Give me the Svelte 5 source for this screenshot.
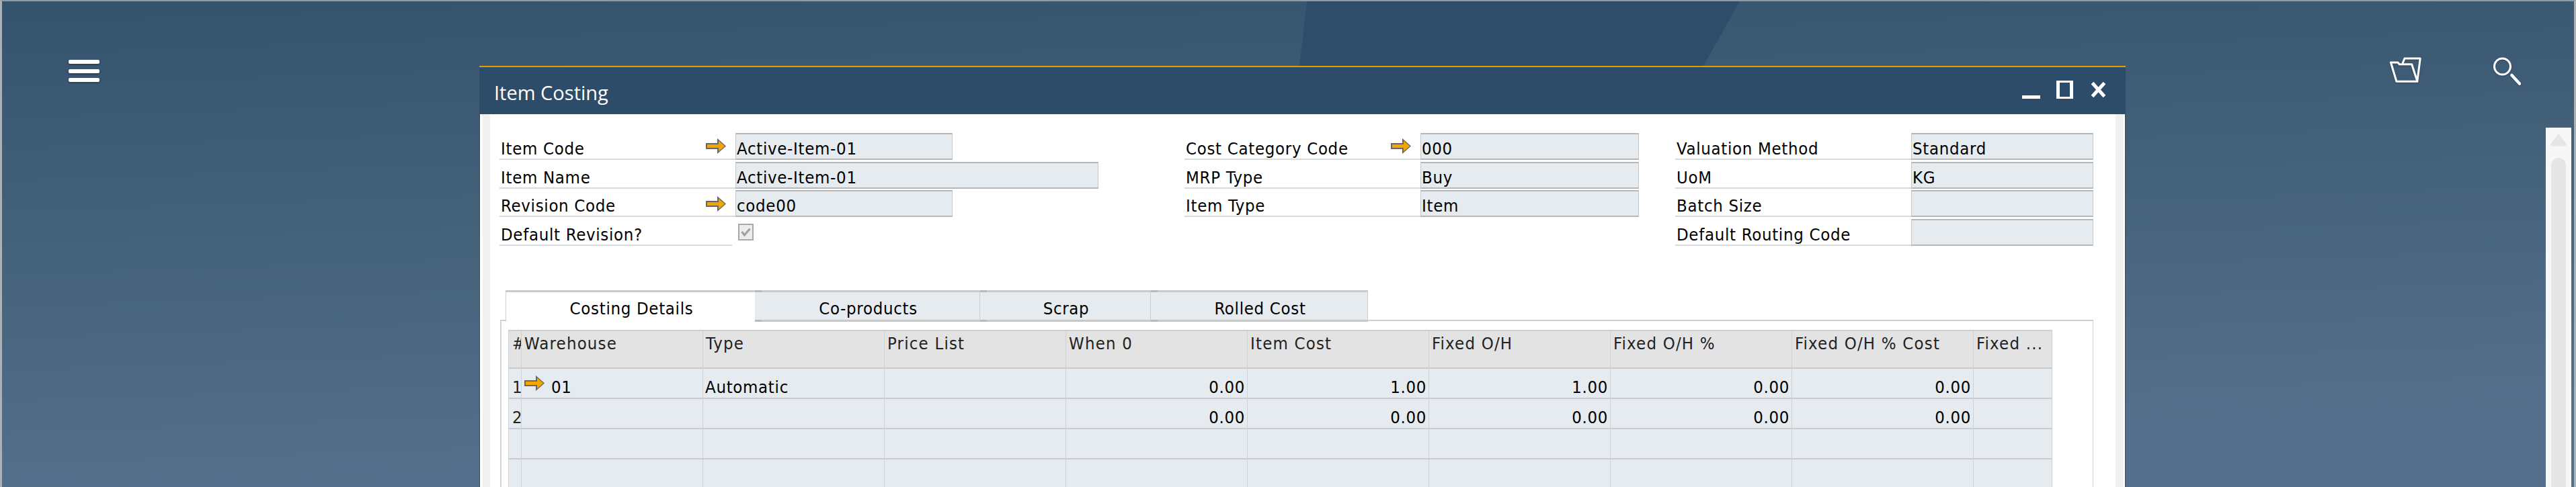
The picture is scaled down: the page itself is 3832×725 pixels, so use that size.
<script>
  const columns = [
    [
      { label: "Item Code", value: "Active-Item-01", link: true, width: 323 },
      { label: "Item Name", value: "Active-Item-01", width: 540 },
      { label: "Revision Code", value: "code00", link: true, width: 323 },
      { label: "Default Revision?", check: true },
    ],
    [
      { label: "Cost Category Code", value: "000", link: true, width: 325 },
      { label: "MRP Type", value: "Buy", width: 325 },
      { label: "Item Type", value: "Item", width: 325 },
    ],
    [
      { label: "Valuation Method", value: "Standard", width: 271 },
      { label: "UoM", value: "KG", width: 271 },
      { label: "Batch Size", value: "", width: 271 },
      { label: "Default Routing Code", value: "", width: 271 },
    ],
  ];

  const tabs = ["Costing Details", "Co-products", "Scrap", "Rolled Cost"];
  const headers = ["#", "Warehouse", "Type", "Price List", "When 0", "Item Cost", "Fixed O/H", "Fixed O/H %", "Fixed O/H % Cost", "Fixed ..."];
  const rows = [
    ["1", "01", "Automatic", "", "0.00", "1.00", "1.00", "0.00", "0.00", ""],
    ["2", "", "", "", "0.00", "0.00", "0.00", "0.00", "0.00", ""],
    ["", "", "", "", "", "", "", "", "", ""],
    ["", "", "", "", "", "", "", "", "", ""],
  ];
</script>

{#snippet arrow()}
  <svg class="arrow" width="32" height="24" viewBox="0 0 32 24">
    <path d="M1 7h17V0l13 11.500-13 11.500v-7H1z" fill="#6f655c" />
    <path d="M3 9h17V3.500l9 8-9 8V14H3z" fill="#f2a700" />
  </svg>
{/snippet}

<div class="desktop">
  <div class="band"></div>

  <header class="topbar">
    <div class="burger"><span></span><span></span><span></span></div>
    <div class="tools">
      <svg class="tool" width="48" height="40" viewBox="0 0 48 40" fill="none" stroke="#fff" stroke-width="3" stroke-linejoin="round" stroke-linecap="round">
        <path d="M1.500 8H12l2.300 2.700h18.400L41 36.300H10z" />
        <path d="M19.300 8.700 22 2h23.300L41 34.700" />
      </svg>
      <svg class="tool" width="42" height="42" viewBox="0 0 42 42" fill="none" stroke="#fff" stroke-linecap="round">
        <circle cx="14.500" cy="14" r="12" stroke-width="3" />
        <path d="M28.500 27 40 39.500" stroke-width="4.500" />
      </svg>
    </div>
  </header>

  <section class="window">
    <div class="titlebar">
      <span class="title">Item Costing</span>
      <div class="winbtns">
        <svg width="27" height="27" viewBox="0 0 27 27"><rect y="22" width="27" height="5" fill="#fff" /></svg>
        <svg width="25" height="27" viewBox="0 0 25 27"><path d="M0 0h25v27H0zM5 3v21h15V3z" fill="#fff" fill-rule="evenodd" /></svg>
        <svg class="close" width="23" height="27" viewBox="0 0 23 27"><path d="M2.500 3.500 20.500 23.500M20.500 3.500 2.500 23.500" stroke="#fff" stroke-width="5" /></svg>
      </div>
    </div>

    <div class="body">
      <div class="inner">
        <div class="form">
          {#each columns as col}
            <div class="col">
              {#each col as f}
                <div class="row">
                  <div class="label" class:short={f.check}>
                    {f.label}
                    {#if f.link}<span class="link">{@render arrow()}</span>{/if}
                  </div>
                  {#if f.check}
                    <span class="check">
                      <svg width="15" height="13" viewBox="0 0 15 13"><path d="M1.500 6 5.500 11 13.500 1.500" fill="none" stroke="#a0a0a0" stroke-width="3" /></svg>
                    </span>
                  {:else}
                    <div class="field" style="width:{f.width}px">{f.value}</div>
                  {/if}
                </div>
              {/each}
            </div>
          {/each}
        </div>

        <div class="tabs">
          {#each tabs as t, i}
            <div class="tab" class:active={i === 0}>{t}</div>
          {/each}
        </div>

        <div class="panel">
          <div class="grid">
            {#each headers as h, i}
              <div class="hd" class:num={i === 0}>{h}</div>
            {/each}
            {#each rows as r}
              {#each r as c, i}
                <div class="cell" class:num={i === 0} class:right={i >= 4 && i < 9}>
                  {#if c === "01"}<span class="cell-arrow">{@render arrow()}</span>{/if}{c}
                </div>
              {/each}
            {/each}
          </div>
        </div>
      </div>
    </div>
  </section>

  <aside class="scroll">
    <svg width="24" height="18" viewBox="0 0 24 18"><path d="M12 2 22 15.500H2z" fill="#e6e6e6" stroke="#e6e6e6" stroke-width="4" stroke-linejoin="round" /></svg>
    <div class="thumb"></div>
  </aside>
</div>

<style>
  :global(body) {
    margin: 0;
    background: #3f5b75;
  }
  .desktop {
    position: relative;
    height: 725px;
    overflow: hidden;
    box-sizing: border-box;
    border-top: 2px solid #8d9aa8;
    border-left: 3px solid #a9b1ba;
    border-right: 3px solid #b0b0b0;
    background: linear-gradient(178deg, #35536d 0, #46637c 400px, #536f8b 725px);
    font-family: "DejaVu Sans Condensed", "DejaVu Sans", sans-serif;
    font-stretch: condensed;
    font-size: 25.500px;
    letter-spacing: 0.700px;
    line-height: 30px;
    color: #000;
  }
  .band {
    position: absolute;
    top: 0;
    left: 1930px;
    width: 660px;
    height: 110px;
    background: #2d4d6a;
    clip-path: polygon(11px 0, 655px 0, 601px 96px, 0 96px);
  }

  .topbar {
    position: relative;
    display: flex;
    justify-content: space-between;
    align-items: flex-start;
    padding: 83px 79px 0 99px;
  }
  .burger {
    display: flex;
    flex-direction: column;
    gap: 7.500px;
    margin-top: 4px;
  }
  .burger span {
    width: 46px;
    height: 6px;
    border-radius: 2px;
    background: #fff;
    box-shadow: 0 1px 3px rgba(0, 0, 0, 0.45);
  }
  .tools {
    display: flex;
    gap: 105px;
  }
  .tool {
    display: block;
    filter: drop-shadow(0 1px 1px rgba(0, 0, 0, 0.25));
  }

  .window {
    position: absolute;
    left: 710px;
    top: 96px;
    width: 2449px;
    height: 640px;
    border-top: 2px solid #e09e00;
    background: #2c4c6a;
  }
  .titlebar {
    display: flex;
    align-items: center;
    justify-content: space-between;
    height: 70px;
    padding: 0 29px 0 22px;
    color: #fff;
  }
  .title {
    font-family: "Open Sans", sans-serif;
    font-stretch: normal;
    font-size: 29px;
    letter-spacing: 0;
    padding-top: 6px;
  }
  .winbtns {
    display: flex;
    gap: 24px;
    margin-bottom: 3px;
  }
  .winbtns svg {
    display: block;
  }
  .winbtns .close {
    margin-left: 2px;
  }
  .body {
    margin: 0 1px;
    height: 570px;
    box-sizing: border-box;
    padding: 0 2px 0 4px;
    background: #fff;
  }
  .inner {
    height: 100%;
    box-sizing: border-box;
    border-left: 11px solid #f0f0f0;
    border-right: 12px solid #f0f0f0;
    padding: 25.330px 0 0 14px;
    background: #fff;
  }

  .form {
    display: grid;
    grid-template-columns: 1019px 730px 622px;
    height: 171px;
  }
  .row {
    display: flex;
    align-items: flex-end;
    height: 42.670px;
  }
  .label {
    position: relative;
    width: 351px;
    height: 100%;
    box-sizing: border-box;
    border-bottom: 2px solid #d6dadd;
    padding-left: 2px;
    display: flex;
    align-items: flex-end;
    white-space: nowrap;
  }
  .label.short {
    width: 346px;
    margin-right: 5px;
  }
  .link {
    position: absolute;
    right: 13px;
    top: 11px;
  }
  .arrow {
    display: block;
  }
  .field {
    height: 40px;
    box-sizing: border-box;
    border: 1px solid #c4c8cb;
    border-top: 2px solid #b4b6b8;
    border-bottom: 2px solid #b4b6b8;
    padding: 6px 0 0 1px;
    background: #e6ebef;
    white-space: nowrap;
  }
  .check {
    align-self: flex-start;
    display: flex;
    align-items: center;
    justify-content: center;
    width: 23px;
    height: 25px;
    margin: 10px 0 0 4px;
    box-sizing: border-box;
    border: 2px solid #a9a9a9;
    background: #ececec;
  }

  .tabs {
    position: relative;
    z-index: 1;
    display: flex;
    height: 47px;
    margin: 66px 0 -3px 9px;
  }
  .tab {
    position: relative;
    box-sizing: border-box;
    width: 335px;
    height: 47px;
    padding: 9px 0 0 3px;
    border-top: 3px solid #cacaca;
    border-bottom: 3px solid #c8c8c8;
    border-right: 1px solid #c8cdd1;
    background: #e6ebef;
    text-align: center;
  }
  .tab:nth-child(3) {
    width: 254px;
  }
  .tab:nth-child(4) {
    width: 323px;
  }
  .tab.active {
    width: 371px;
    border-bottom: 0;
    border-right: 0;
    border-left: 1px solid #d0d0d0;
    background: #fff;
  }
  .tab:not(.active)::before {
    content: "";
    position: absolute;
    left: 0;
    top: -3px;
    width: 10px;
    height: 3px;
    background: #b9b9b9;
  }
  .tab:not(.active)::after {
    content: "";
    position: absolute;
    left: 0;
    bottom: -3px;
    width: 10px;
    height: 3px;
    background: #b9b9b9;
  }

  .panel {
    width: 2370px;
    box-sizing: border-box;
    margin-left: 1px;
    height: 260px;
    border-top: 2px solid #d0d0d0;
    border-left: 2px solid #d4d4d4;
    border-right: 1px solid #d4d4d4;
    padding: 13px 0 0 10px;
  }
  .grid {
    display: grid;
    width: 2297px;
    grid-template-columns: 20px repeat(8, 270px) 117px;
    grid-template-rows: 58px repeat(4, 45px);
  }
  .hd,
  .cell {
    box-sizing: border-box;
    overflow: hidden;
    white-space: nowrap;
    border-right: 1px solid #cdd2d6;
    padding: 0 3px;
  }
  .hd {
    border-top: 2px solid #cfcfcf;
    border-bottom: 2px solid #c8c8c8;
    background: #e3e3e3;
    padding: 3px 3px 0 4px;
    letter-spacing: 1.200px;
    color: #222;
  }
  .cell {
    display: flex;
    align-items: flex-end;
    border-bottom: 2px solid #c8ccd0;
    background: #e6ebef;
    padding-bottom: 1px;
  }
  .hd.num,
  .cell.num {
    padding: 0 0 0 5px;
    border-left: 1px solid #cfd3d6;
    color: #222;
  }
  .hd.num {
    padding-top: 3px;
  }
  .cell.num {
    padding-bottom: 1px;
  }
  .cell.right {
    justify-content: flex-end;
  }
  .cell-arrow {
    margin: 0 9px 8px 0;
  }

  .scroll {
    position: absolute;
    left: 3784px;
    top: 188px;
    width: 38px;
    height: 540px;
    box-sizing: border-box;
    padding-top: 10px;
    background: #f7f7f7;
    display: flex;
    flex-direction: column;
    align-items: center;
  }
  .scroll svg {
    display: block;
  }
  .thumb {
    width: 22px;
    flex: 1;
    margin-top: 17px;
    border-radius: 11px 11px 0 0;
    background: #e6e6e6;
  }
</style>
